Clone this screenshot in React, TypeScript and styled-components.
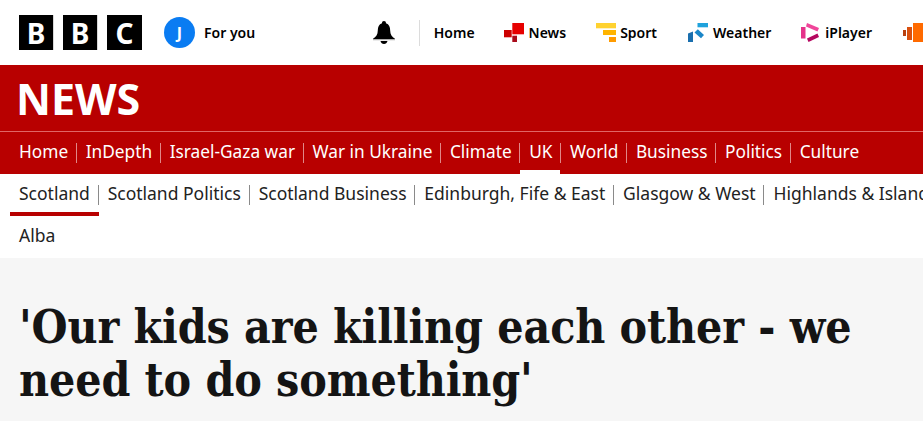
import React from "react";
import styled, { createGlobalStyle } from "styled-components";

const GlobalStyle = createGlobalStyle`
  html, body {
    margin: 0;
    padding: 0;
    background: #ffffff;
    overflow: hidden;
  }
  * { box-sizing: border-box; }
`;

const Page = styled.div`
  width: 923px;
  overflow: hidden;
  font-family: "Noto Sans", "Open Sans", sans-serif;
  color: #141414;
`;

const TopBar = styled.header`
  display: flex;
  align-items: center;
  height: 65px;
  padding-left: 19px;
`;

const Logo = styled.div`
  display: flex;
  gap: 9px;
`;

const LogoBlock = styled.span`
  display: flex;
  align-items: center;
  justify-content: center;
  width: 35px;
  height: 35px;
  background: #000;
  color: #fff;
  font-weight: 700;
  font-size: 28px;
  line-height: 1;
  &:not(:last-child) {
    border-right: 1px solid #d8d8d8;
  }
`;

const Account = styled.div`
  display: flex;
  align-items: center;
  gap: 9px;
  margin-left: 22px;
  width: 209px;
`;

const Avatar = styled.span`
  display: flex;
  align-items: center;
  justify-content: center;
  width: 31px;
  height: 31px;
  border-radius: 50%;
  background: #0a7cf2;
  color: #fff;
  font-size: 16px;
  font-weight: 700;
`;

const TopText = styled.span`
  font-size: 14px;
  font-weight: 600;
  color: #000;
  white-space: nowrap;
`;

const Bell = styled.svg`
  width: 22px;
  height: 24px;
  margin-right: 24px;
`;

const Services = styled.nav`
  display: flex;
  align-items: center;
  height: 26px;
  border-left: 1px solid #dcdcdc;
  padding-left: 14px;
`;

const Service = styled.a<{ $gap: number; $tight?: boolean }>`
  display: flex;
  align-items: center;
  gap: ${(p) => (p.$tight ? 4 : 5)}px;
  margin-right: ${(p) => p.$gap}px;
`;

const ServiceIcon = styled.svg`
  width: 20px;
  height: 20px;
  flex: none;
`;

const RedBand = styled.div`
  background: #b80000;
  color: #fff;
  height: 109px;
`;

const Masthead = styled.div`
  display: flex;
  align-items: center;
  height: 67px;
  padding-left: 16px;
  border-bottom: 1px solid #e06666;
  font-size: 43px;
  font-weight: 700;
  line-height: 1;
`;

const MainNav = styled.nav`
  display: flex;
  padding-top: 11px;
  padding-left: 10px;
`;

const MainItem = styled.a<{ $active?: boolean }>`
  position: relative;
  padding: 0 7.5px 2px 9px;
  font-size: 17.3px;
  height: 20px;
  line-height: 18px;
  border-right: 1px solid #e08888;
  white-space: nowrap;
  &:last-child { border-right: 0; }
  ${(p) =>
    p.$active &&
    `&::after {
      content: "";
      position: absolute;
      left: 0;
      right: 0;
      bottom: -11px;
      height: 4px;
      background: #fff;
    }`}
`;

const SubNav = styled.nav`
  display: flex;
  flex-wrap: wrap;
  height: 84px;
  padding-left: 10px;
  width: 975px;
  align-content: flex-start;
`;

const SubItem = styled.a<{ $active?: boolean }>`
  position: relative;
  height: 42px;
  padding: 11px 0 0;
  font-size: 17.5px;
  color: #222;
  white-space: nowrap;
  ${(p) =>
    p.$active &&
    `&::after {
      content: "";
      position: absolute;
      left: 0;
      right: 0;
      bottom: 0;
      height: 4px;
      background: #b80000;
    }`}
`;

const SubLabel = styled.span<{ $last?: boolean }>`
  display: block;
  height: 20px;
  padding: 0 7.8px 2px 9px;
  line-height: 17px;
  border-right: ${(p) => (p.$last ? "0" : "1px solid #8a8a8a")};
`;

const Article = styled.main`
  background: #f6f6f6;
  height: 163px;
  padding: 43px 0 0 19px;
`;

const Headline = styled.h1`
  margin: 0;
  width: 880px;
  font-family: "DejaVu Serif Condensed", "DejaVu Serif", serif;
  font-stretch: condensed;
  font-size: 46px;
  font-weight: 700;
  letter-spacing: -0.1px;
  line-height: 53px;
  color: #141414;
`;

const mainLinks = ["Home", "InDepth", "Israel-Gaza war", "War in Ukraine", "Climate", "UK", "World", "Business", "Politics", "Culture"];
const subLinks = ["Scotland", "Scotland Politics", "Scotland Business", "Edinburgh, Fife & East", "Glasgow & West", "Highlands & Islands", "Alba"];

export default function App(): JSX.Element {
  return (
    <Page>
      <GlobalStyle />
      <TopBar>
        <Logo>
          <LogoBlock>B</LogoBlock>
          <LogoBlock>B</LogoBlock>
          <LogoBlock>C</LogoBlock>
        </Logo>
        <Account>
          <Avatar>J</Avatar>
          <TopText>For you</TopText>
        </Account>
        <Bell viewBox="0 0 22 24">
          <path d="M11 0C9.700 0 9 .9 9 2.200 5.900 3.200 4.800 6 4.800 9.500 4.800 13.500 3 15.800 0 17.700V18h22v-.3c-3-1.900-4.800-4.200-4.800-8.200 0-3.500-1.100-6.300-4.200-7.300C13 .9 12.300 0 11 0z" fill="#000" />
          <rect x="0" y="18.200" width="22" height="1" fill="#999" />
          <path d="M7.500 20h7c-.4 1.900-1.800 3-3.500 3S7.900 21.900 7.500 20z" fill="#000" />
        </Bell>
        <Services>
          <Service $gap={29}><TopText>Home</TopText></Service>
          <Service $gap={30}>
            <ServiceIcon viewBox="0 0 20 20">
              <rect x="8.300" y="0" width="11.700" height="11.300" fill="#e60000" />
              <rect x="0" y="7" width="7.700" height="7.300" fill="#cc0000" />
              <rect x="8.300" y="12.700" width="4.700" height="6.300" fill="#a90b1b" />
            </ServiceIcon>
            <TopText>News</TopText>
          </Service>
          <Service $gap={31} $tight>
            <ServiceIcon viewBox="0 0 20 20">
              <rect x="0" y="0" width="20" height="5.300" fill="#ffd230" />
              <rect x="7" y="7" width="13" height="5" fill="#ffb400" />
              <rect x="13" y="14" width="7" height="5" fill="#ff9b00" />
            </ServiceIcon>
            <TopText>Sport</TopText>
          </Service>
          <Service $gap={29}>
            <ServiceIcon viewBox="0 0 20 20">
              <rect x="9.500" y="0" width="10.500" height="4.300" fill="#1fa2dc" />
              <path d="M6.500 9.500 9.800 6.200 16 12 13 15.300z" fill="#1a86c8" />
              <path d="M0 10.500 5 8.500V19H0z" fill="#1a6fae" />
            </ServiceIcon>
            <TopText>Weather</TopText>
          </Service>
          <Service $gap={31}>
            <ServiceIcon viewBox="0 0 20 20">
              <rect x="1" y="4" width="4.500" height="11.500" fill="#e5328a" />
              <path d="M7 0 19 5 17.500 8.500 6 3.500z" fill="#f0459a" />
              <path d="M7 15.500 17.500 10.500 19 14 8.500 19z" fill="#b5075f" />
            </ServiceIcon>
            <TopText>iPlayer</TopText>
          </Service>
          <Service $gap={0}>
            <ServiceIcon viewBox="0 0 20 20">
              <rect x="10" y="0" width="10" height="19" fill="#ff6a00" />
              <rect x="0" y="7" width="3" height="6" fill="#b8400f" />
              <rect x="4" y="4" width="5" height="13" fill="#d9500f" />
            </ServiceIcon>
          </Service>
        </Services>
      </TopBar>
      <RedBand>
        <Masthead>NEWS</Masthead>
        <MainNav>
          {mainLinks.map((l) => (
            <MainItem key={l} $active={l === "UK"}>{l}</MainItem>
          ))}
        </MainNav>
      </RedBand>
      <SubNav>
        {subLinks.map((l, i) => (
          <SubItem key={l} $active={i === 0}>
            <SubLabel $last={i === subLinks.length - 1}>{l}</SubLabel>
          </SubItem>
        ))}
      </SubNav>
      <Article>
        <Headline>'Our kids are killing each other - we need to do something'</Headline>
      </Article>
    </Page>
  );
}
